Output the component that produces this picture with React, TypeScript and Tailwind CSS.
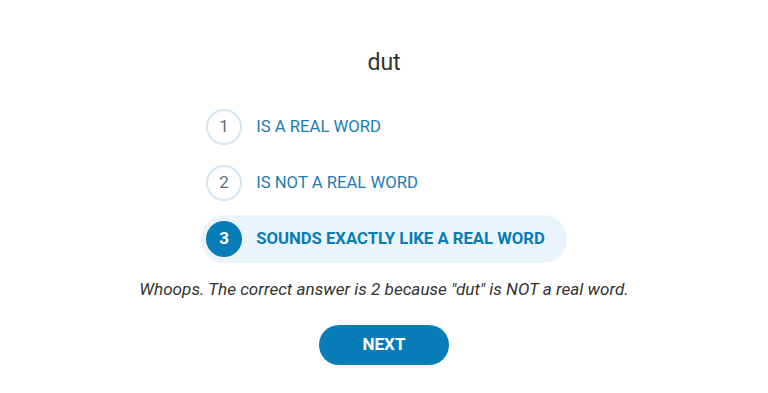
const options = [
  { n: 1, label: 'IS A REAL WORD' },
  { n: 2, label: 'IS NOT A REAL WORD' },
  { n: 3, label: 'SOUNDS EXACTLY LIKE A REAL WORD' },
]

export default function App() {
  const selected = 3

  return (
    <div className="w-[768px] h-[393px] bg-white flex flex-col items-center font-['Roboto',sans-serif]">
      <h1 className="mt-[48px] text-[23px] leading-[30px] text-[#333333]">dut</h1>

      <ul className="mt-[25px] flex flex-col gap-[8px] self-center">
        {options.map((o) => {
          const active = o.n === selected
          return (
            <li
              key={o.n}
              className={
                active
                  ? 'flex items-center h-[48px] pl-[5px] pr-[22px] rounded-full bg-[#eaf4fa]'
                  : 'flex items-center h-[48px] pl-[5px] pr-[22px] rounded-full'
              }
            >
              {active ? (
                <span className="w-[36px] h-[36px] rounded-full bg-[#077cb6] text-white font-bold text-[17px] flex items-center justify-center">
                  {o.n}
                </span>
              ) : (
                <span className="w-[36px] h-[36px] rounded-full border-2 border-[#d3e7f2] text-[#5b6f7a] text-[17px] flex items-center justify-center">
                  {o.n}
                </span>
              )}
              <span
                className={
                  active
                    ? 'ml-[14px] text-[16.7px] font-bold text-[#077cb6]'
                    : 'ml-[14px] text-[16.7px] text-[#1a7db3]'
                }
              >
                {o.label}
              </span>
            </li>
          )
        })}
      </ul>

      <p className="mt-[14px] text-[17.1px] italic text-[#333333]">
        Whoops. The correct answer is 2 because "dut" is NOT a real word.
      </p>

      <button className="mt-[22px] w-[130px] h-[40px] rounded-full bg-[#077cb6] text-white font-bold text-[17px]">
        NEXT
      </button>
    </div>
  )
}
